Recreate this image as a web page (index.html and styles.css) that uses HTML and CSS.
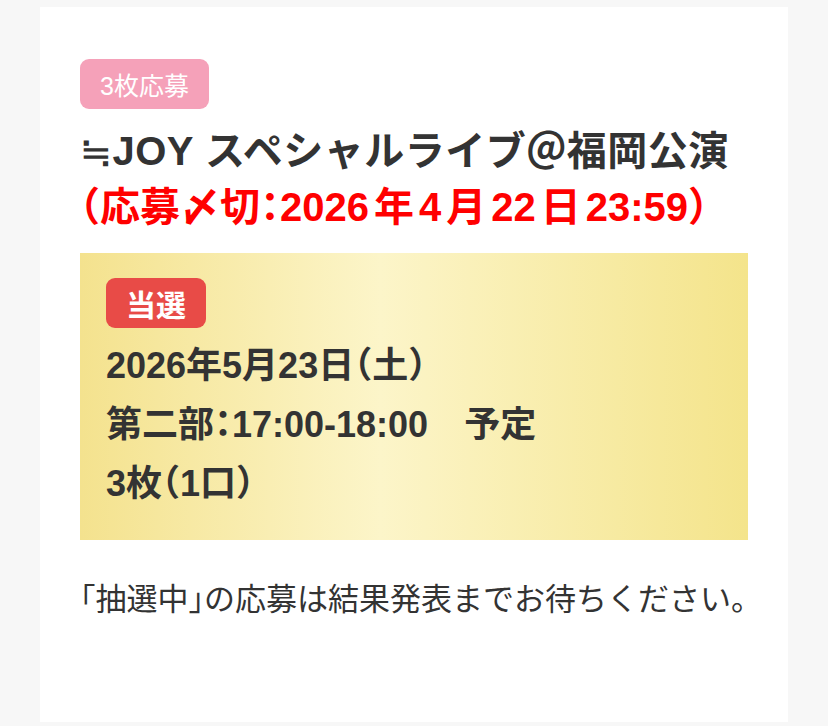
FILE: index.html
```html
<!DOCTYPE html>
<html lang="ja">
<head>
<meta charset="utf-8">
<title>応募状況</title>
<link rel="stylesheet" href="styles.css">
</head>
<body>
<main class="card">
  <span class="count-badge">3枚応募</span>
  <h1 class="title">≒JOY スペシャルライブ＠福岡公演</h1>
  <p class="deadline">（応募〆切：2026年4月22日23:59）</p>
  <section class="result">
    <span class="win-badge">当選</span>
    <p class="line">2026年5月23日（土）</p>
    <p class="line">第二部：17:00-18:00　予定</p>
    <p class="line">3枚（1口）</p>
  </section>
  <p class="note">「抽選中」の応募は結果発表までお待ちください。</p>
</main>
</body>
</html>
```
FILE: styles.css
```css
html, body {
  margin: 0;
  padding: 0;
  background: #f7f7f7;
}
body {
  font-family: "Liberation Sans", "Noto Sans CJK JP", sans-serif;
  font-feature-settings: "halt";
  color: #333;
}
.card {
  margin: 7px 40px 0;
  background: #fff;
  padding: 52px 40px 0;
  height: 715px;
  box-sizing: border-box;
  display: flex;
  flex-direction: column;
  align-items: flex-start;
}
.count-badge {
  display: inline-flex;
  align-items: center;
  height: 50px;
  padding: 0 20px;
  border-radius: 9px;
  background: #f5a1b9;
  color: #fff;
  font-size: 25px;
  font-weight: 400;
  box-sizing: border-box;
}
.title {
  margin: 14px 0 0;
  font-size: 40px;
  line-height: 56px;
  font-weight: 700;
  letter-spacing: 0.5px;
  color: #333;
  white-space: nowrap;
}
.deadline {
  margin: 0;
  font-size: 40px;
  line-height: 56px;
  font-weight: 700;
  color: #ff0000;
  white-space: nowrap;
  text-autospace: normal;
}
.result {
  align-self: stretch;
  margin-top: 18px;
  padding: 25px 26px 27px;
  background: linear-gradient(to right, #f4e28e 0%, #fcf5c9 45%, #f4e48b 100%);
  display: flex;
  flex-direction: column;
  align-items: flex-start;
}
.win-badge {
  display: inline-flex;
  align-items: center;
  height: 50px;
  padding: 0 20px;
  border-radius: 9px;
  background: #e84b47;
  color: #fff;
  font-size: 30px;
  font-weight: 700;
  margin-bottom: 8px;
}
.line {
  margin: 0;
  font-size: 36px;
  line-height: 59px;
  font-weight: 700;
  color: #333;
  white-space: nowrap;
}
.note {
  margin: 37px 0 0;
  font-size: 31px;
  line-height: 46px;
  font-weight: 400;
  color: #333;
  white-space: nowrap;
}
```
